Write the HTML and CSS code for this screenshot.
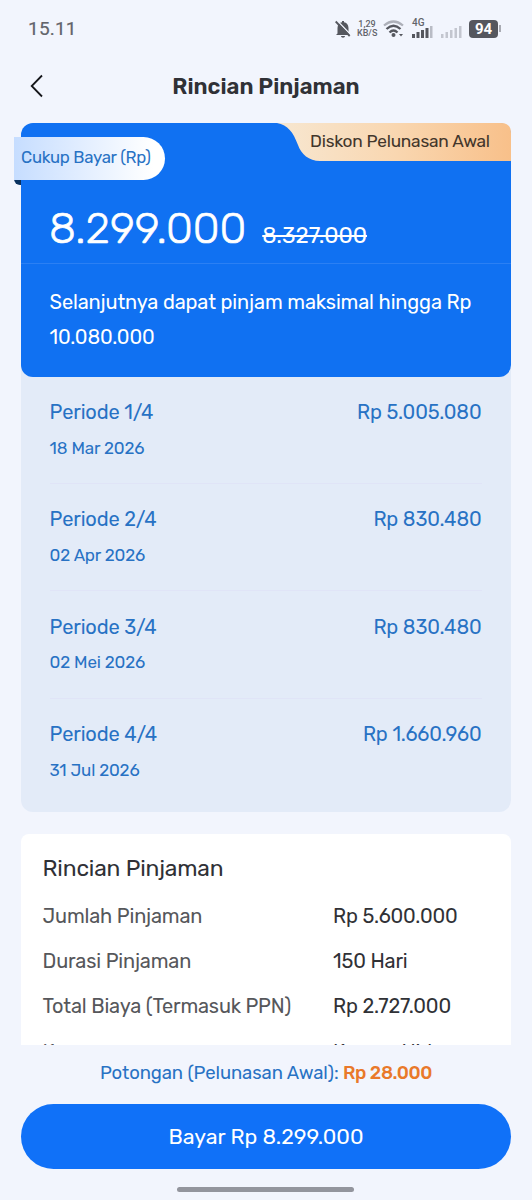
FILE: index.html
```html
<!DOCTYPE html>
<html lang="id">
<head>
<meta charset="utf-8">
<title>Rincian Pinjaman</title>
<link rel="stylesheet" href="styles.css">
</head>
<body>
<div class="screen">
  <div class="statusbar">
    <span class="clock">15.11</span>
    <div class="indicators">
      <svg class="bell" width="16" height="18" viewBox="0 0 16 18"><path d="M2.500 13.500V8C2.500 4.500 4.500 2.700 7 2.300V1h2v1.300c2.500 .4 4.500 2.200 4.500 5.700v5.500l1.500 1.500H1z" fill="#55575e"/><path d="M6 16h4c0 2.200-4 2.200-4 0z" fill="#55575e"/><path d="M2 .5 16 15" stroke="#f2f5fd" stroke-width="1.400"/><path d="M.7 1.500 14.700 16" stroke="#55575e" stroke-width="1.800"/></svg>
      <span class="speed"><span>1,29</span><span>KB/S</span></span>
      <svg class="wifi" width="21" height="18" viewBox="0 0 21 18" fill="none"><path d="M1 5.500Q10.500-2.500 20 5.500" stroke="#adb0b9" stroke-width="2.200"/><path d="M3.500 9Q10.500 2.500 17.500 9" stroke="#55575e" stroke-width="2.300"/><path d="M6.500 12.500Q10.500 8.500 14.500 12.500" stroke="#55575e" stroke-width="2.300"/><circle cx="10.500" cy="15" r="2" fill="#55575e"/><path d="M16 14h4l-2 2.500z" fill="#55575e"/></svg>
      <span class="mobile"><span class="gen">4G</span>
        <svg class="bars" width="21" height="12" viewBox="0 0 21 12" fill="#55575e"><rect y="8" width="3" height="4"/><rect x="4.500" y="6" width="3" height="6"/><rect x="9" y="4" width="3" height="8"/><rect x="13.500" y="2" width="3" height="10"/><rect x="18" width="2.500" height="12" fill="#b9bcc5"/></svg>
      </span>
      <svg class="bars bars-empty" width="21" height="12" viewBox="0 0 21 12" fill="#c3c6cf"><rect y="8" width="2.500" height="4"/><rect x="4.500" y="6" width="2.500" height="6"/><rect x="9" y="4" width="2.500" height="8"/><rect x="13.500" y="2" width="2.500" height="10"/><rect x="18" width="2.500" height="12"/></svg>
      <span class="battery">94</span><i class="battery-tip"></i>
    </div>
  </div>
  <header class="titlebar">
    <svg class="back" width="14" height="24" viewBox="0 0 14 24" fill="none"><path d="M12 1.500 1.700 12 12 22.500" stroke="#15161a" stroke-width="1.800"/></svg>
    <h1 class="title">Rincian Pinjaman</h1>
  </header>
  <main class="content">
    <section class="plan">
      <div class="hero">
        <div class="promo">
          <svg class="promo-shape" width="234" height="38" viewBox="0 0 234 38"><defs><linearGradient id="peach"><stop offset="0" stop-color="#f7e7d1"/><stop offset=".5" stop-color="#f9d7b1"/><stop offset="1" stop-color="#f8c08a"/></linearGradient></defs><path d="M0 0H224Q234 0 234 10V38H43C32 38 24 31 21 22C16 9 11 2 0 0Z" fill="url(#peach)"/></svg>
          <span class="promo-text">Diskon Pelunasan Awal</span>
        </div>
        <i class="fold"></i>
        <div class="ribbon">Cukup Bayar (Rp)</div>
        <div class="amount"><span class="total">8.299.000</span><span class="old">8.327.000</span></div>
        <div class="next">Selanjutnya dapat pinjam maksimal hingga Rp<br>10.080.000</div>
      </div>
      <ul class="periods">
        <li class="period"><div class="row"><span>Periode 1/4</span><span>Rp 5.005.080</span></div><span class="date">18 Mar 2026</span></li>
        <li class="period"><div class="row"><span>Periode 2/4</span><span>Rp 830.480</span></div><span class="date">02 Apr 2026</span></li>
        <li class="period"><div class="row"><span>Periode 3/4</span><span>Rp 830.480</span></div><span class="date">02 Mei 2026</span></li>
        <li class="period"><div class="row"><span>Periode 4/4</span><span>Rp 1.660.960</span></div><span class="date">31 Jul 2026</span></li>
      </ul>
    </section>
    <section class="details">
      <h2 class="details-title">Rincian Pinjaman</h2>
      <dl class="facts">
        <dt>Jumlah Pinjaman</dt><dd>Rp 5.600.000</dd>
        <dt>Durasi Pinjaman</dt><dd>150 Hari</dd>
        <dt>Total Biaya (Termasuk PPN)</dt><dd>Rp 2.727.000</dd>
        <dt>Kegunaan</dt><dd>Karena Hidup</dd>
      </dl>
    </section>
  </main>
  <footer class="footer">
    <p class="saving">Potongan (Pelunasan Awal): <span class="saving-value">Rp 28.000</span></p>
    <button class="pay">Bayar Rp 8.299.000</button>
    <i class="home"></i>
  </footer>
</div>
</body>
</html>
```
FILE: styles.css
```css
* { box-sizing: border-box; }
body { margin: 0; background: #f2f5fd; font-family: Rubik, Roboto, "Liberation Sans", sans-serif; color: #303136; white-space: nowrap; }
.screen { width: 532px; height: 1200px; display: flex; flex-direction: column; overflow: hidden; }
.statusbar { height: 56px; flex: none; display: flex; justify-content: space-between; align-items: center; padding: 1px 31px 0 28px; color: #62646b; }
.clock { font: 400 19px/24px Roboto, sans-serif; letter-spacing: .2px; -webkit-text-stroke: .2px; }
.indicators { display: flex; align-items: center; }
.speed { display: flex; flex-direction: column; width: 20px; margin: 0 6px 0 6px; font: 500 9px/9px Roboto, sans-serif; text-align: center; }
.mobile { display: flex; flex-direction: column; height: 19px; margin: 0 8px 0 8px; font: 500 10px/8px Roboto, sans-serif; }
.bars { margin-top: -1px; }
.bars-empty { margin: 6px 7px 0 0; }
.battery { width: 29px; height: 18px; border-radius: 4px; background: #55575e; color: #fff; font: 700 15px/18px Roboto, sans-serif; text-align: center; }
.battery-tip { width: 2px; height: 7px; margin-left: 1px; background: #a9abb3; }
.titlebar { height: 67px; flex: none; display: grid; grid-template-columns: 30px 1fr 30px; align-items: center; padding: 0 30px 7px; }
.title { margin: 1px 0 0; font-size: 22.200px; line-height: 28px; font-weight: 600; text-align: center; color: #303136; }
.content { flex: 1; min-height: 0; padding: 0 21px; overflow: hidden; }
.plan { height: 689px; border-radius: 12px; background: #e3ebf8; }
.hero { position: relative; height: 254px; border-radius: 12px; background: #1071f2; color: #fff; padding-top: 84px; }
.promo { position: absolute; top: 0; right: 0; width: 234px; height: 38px; }
.promo-shape { display: block; }
.promo-text { position: absolute; left: 33px; top: 6px; font-size: 17.300px; line-height: 24px; letter-spacing: -.22px; color: #42362b; }
.ribbon { position: absolute; left: -7px; top: 14px; width: 151px; height: 43px; padding-left: 7px; border-radius: 0 22px 22px 0; background: linear-gradient(90deg, #c6ddff, #fff 92%); color: #2872c4; font-size: 16.800px; line-height: 41px; letter-spacing: -.3px; }
.fold { position: absolute; left: -7px; top: 56px; width: 7px; height: 6px; border-radius: 0 0 0 6px; background: #09315f; }
.amount { height: 57px; padding: 0 28px; display: flex; align-items: baseline; gap: 16px; border-bottom: 1px solid #2b80f4; line-height: 42px; }
.total { font-size: 43.500px; font-weight: 300; letter-spacing: -.05px; -webkit-text-stroke: .7px; }
.old { font-size: 22.500px; text-decoration: line-through; text-decoration-thickness: 2px; }
.next { padding: 21px 28.600px 0; font-size: 20px; line-height: 35px; letter-spacing: -.14px; }
.periods { list-style: none; margin: 0; padding: 0 29.500px 0 28.600px; color: #2872c4; letter-spacing: -.15px; }
.period { height: 107.200px; padding-top: 23.300px; border-bottom: 1px solid #e0e4f7; }
.period:last-child { border: 0; }
.row { display: flex; justify-content: space-between; font-size: 20px; line-height: 24px; }
.date { display: block; margin-top: 12.700px; font-size: 17px; line-height: 22px; }
.details { margin-top: 22px; height: 300px; border-radius: 8px; background: #fff; padding: 20px 21.600px; }
.details-title { margin: 0 0 18px; font-size: 22.800px; line-height: 30px; font-weight: 400; letter-spacing: -.16px; }
.facts { display: grid; grid-template-columns: 290.500px 1fr; grid-template-rows: 45px 45px 46px; margin: 0; font-size: 20px; line-height: 28px; letter-spacing: -.17px; color: #303136; }
.facts dt { color: #56575b; }
.facts dd { margin: 0; }
.footer { flex: none; height: 155px; padding: 15px 21px 0; display: flex; flex-direction: column; align-items: center; }
.saving { margin: 0; font-size: 18.500px; line-height: 26px; letter-spacing: -.09px; color: #2872c4; }
.saving-value { color: #e9792a; font-weight: 500; letter-spacing: -.4px; }
.pay { width: 100%; height: 65px; flex: none; margin: 18px 0 18px; border: 0; border-radius: 33px; background: #1071f8; color: #fff; font: 400 21.400px/65px Rubik, Roboto, sans-serif; padding: 0; }
.home { width: 177px; height: 5px; margin-right: 1px; border-radius: 3px; background: #93959d; }
```
